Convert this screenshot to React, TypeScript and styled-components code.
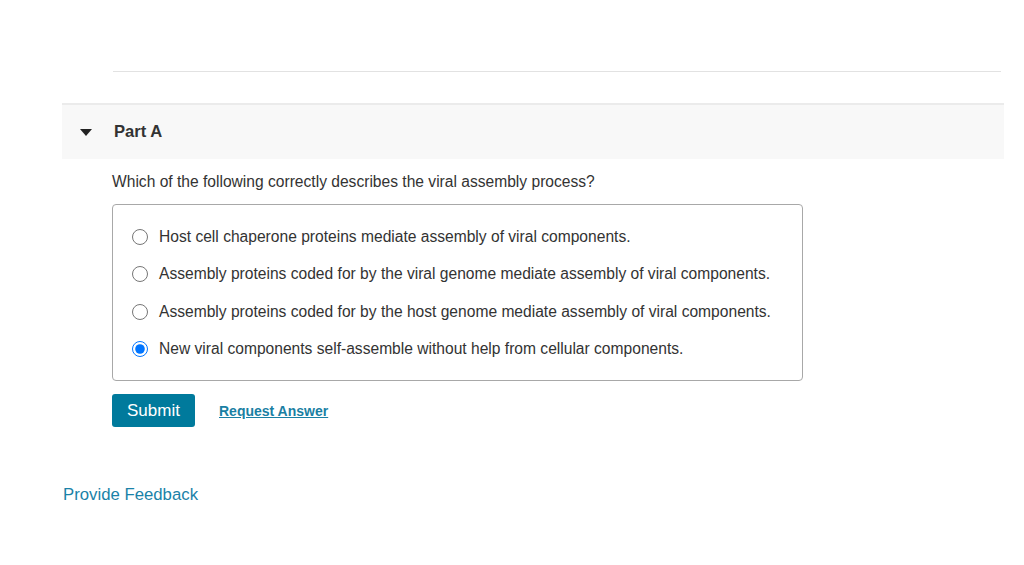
import { useState } from 'react';
import styled, { createGlobalStyle } from 'styled-components';

const options = [
  'Host cell chaperone proteins mediate assembly of viral components.',
  'Assembly proteins coded for by the viral genome mediate assembly of viral components.',
  'Assembly proteins coded for by the host genome mediate assembly of viral components.',
  'New viral components self-assemble without help from cellular components.',
];

const GlobalStyle = createGlobalStyle`
  body {
    margin: 0;
    background: #ffffff;
    font-family: 'Liberation Sans', Arial, sans-serif;
    color: #333333;
  }
`;

export default function App() {
  const [selected, setSelected] = useState(3);

  return (
    <>
      <GlobalStyle />
      <Page>
        <TopRule />

        <PartHeader>
          <Caret viewBox='0 0 12 8' aria-hidden>
            <path d='M0 0 L12 0 L6 7 Z' fill='#222' />
          </Caret>
          <PartTitle>Part A</PartTitle>
        </PartHeader>

        {/* Question body */}
        <PartBody>
          <Question>Which of the following correctly describes the viral assembly process?</Question>

          <OptionsBox>
            {options.map((text, index) => (
              <OptionRow key={index}>
                <Radio
                  type='radio'
                  name='partA'
                  checked={selected === index}
                  onChange={() => setSelected(index)}
                />
                <OptionText>{text}</OptionText>
              </OptionRow>
            ))}
          </OptionsBox>

          <Actions>
            <SubmitButton>Submit</SubmitButton>
            <RequestLink href='#'>Request Answer</RequestLink>
          </Actions>
        </PartBody>

        <Feedback href='#'>Provide Feedback</Feedback>
      </Page>
    </>
  );
}

const Page = styled.div`
  display: flex;
  flex-direction: column;
  width: 942px;
  margin-left: 62px;
  padding-top: 71px;
`;

const TopRule = styled.div`
  margin-left: 51px;
  width: 888px;
  height: 1px;
  background-color: #e2e2e2;
`;

// ------------------------------- Header ------------------------------- //
const PartHeader = styled.div`
  margin-top: 31px;
  display: flex;
  align-items: center;
  height: 54px;
  border-top: 2px solid #ebebeb;
  background-color: #f8f8f8;
  padding-left: 18px;
`;

const Caret = styled.svg`
  width: 12px;
  height: 8px;
  margin-top: 1px;
`;

const PartTitle = styled.h2`
  margin: 0 0 0 22px;
  font-size: 16.6px;
  font-weight: 700;
  color: #333333;
`;

// ------------------------------- Body ------------------------------- //
const PartBody = styled.div`
  display: flex;
  flex-direction: column;
  padding-left: 50px;
`;

const Question = styled.p`
  margin: 14px 0 0;
  font-size: 15.6px;
  line-height: 18px;
  color: #333333;
`;

const OptionsBox = styled.div`
  margin-top: 13px;
  width: 691px;
  box-sizing: border-box;
  border: 1px solid #a8a8a8;
  border-radius: 4px;
  padding: 23px 18px 22px;
  display: flex;
  flex-direction: column;
  gap: 20px;
`;

const OptionRow = styled.label`
  display: flex;
  align-items: center;
  gap: 11px;
  height: 17.5px;
  cursor: pointer;
`;

const Radio = styled.input`
  width: 16px;
  height: 16px;
  margin: 0 0 0 1px;
  cursor: pointer;
`;

const OptionText = styled.span`
  font-size: 15.6px;
  color: #333333;
`;

// ------------------------------- Actions ------------------------------- //
const Actions = styled.div`
  margin-top: 13px;
  display: flex;
  align-items: center;
  gap: 24px;
`;

const SubmitButton = styled.button`
  width: 83px;
  height: 33px;
  border: none;
  border-radius: 3px;
  background-color: #007a9c;
  color: #ffffff;
  font-family: 'Liberation Sans', Arial, sans-serif;
  font-size: 17px;
  cursor: pointer;
`;

const RequestLink = styled.a`
  font-size: 14px;
  font-weight: 700;
  color: #1a7fa3;
  text-decoration: underline;
`;

const Feedback = styled.a`
  margin-top: 58px;
  margin-left: 1px;
  font-size: 16.75px;
  color: #1a82a8;
  text-decoration: none;
`;
